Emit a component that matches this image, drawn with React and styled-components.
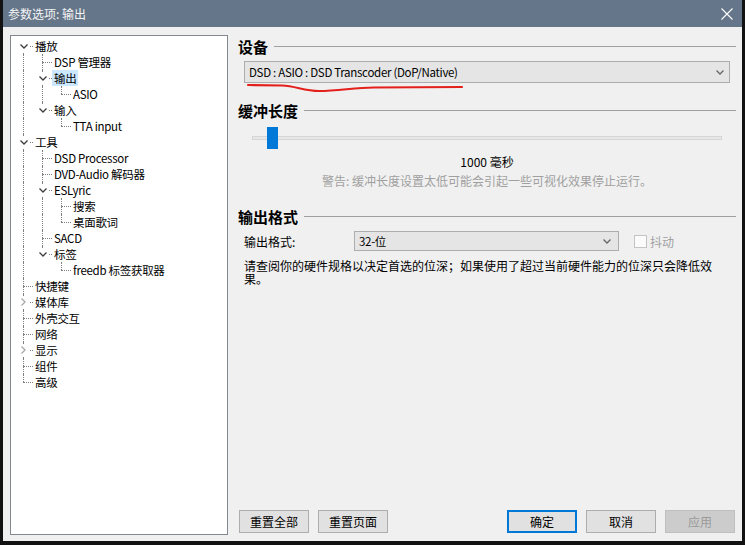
import React from "react";
import styled, { createGlobalStyle } from "styled-components";

const GlobalStyle = createGlobalStyle`
  body {
    margin: 0;
    background: #121212;
    font-family: "Noto Sans CJK SC", "Noto Sans", sans-serif;
    font-size: 12px;
    color: #000;
  }
`;

const Window = styled.div`
  width: 739px;
  height: 541px;
  margin-left: 3px;
  display: flex;
  flex-direction: column;
  background: #f0f0f0;
`;

const TitleBar = styled.div`
  height: 27px;
  flex: none;
  display: flex;
  align-items: center;
  justify-content: space-between;
  padding: 0 9px 0 5px;
  background: #66768a;
  color: #f4f4f4;
  font-size: 12px;
`;

const Body = styled.div`
  flex: 1;
  display: flex;
  gap: 10px;
  padding: 8px 6px 6px 7px;
  min-height: 0;
`;

/* ---------- tree ---------- */

const Tree = styled.div`
  width: 218px;
  flex: none;
  box-sizing: border-box;
  border: 1px solid #828790;
  background: #fff;
  padding: 2px 0 0 3px;
`;

const Row = styled.div`
  display: flex;
  height: 16px;
`;

const Rail = styled.div`
  width: 19px;
  flex: none;
  position: relative;

  &::before {
    content: "";
    display: ${({ $on }) => ($on ? "block" : "none")};
    position: absolute;
    left: 9px;
    top: 0;
    bottom: 0;
    border-left: 1px dotted #808080;
  }
`;

const Joint = styled.div`
  width: 19px;
  flex: none;
  position: relative;

  &::before {
    content: "";
    position: absolute;
    left: 9px;
    top: ${({ $first }) => ($first ? 8 : 0)}px;
    bottom: ${({ $last }) => ($last ? 8 : 0)}px;
    border-left: 1px dotted #808080;
  }

  &::after {
    content: "";
    position: absolute;
    left: 9px;
    right: 0;
    top: 8px;
    border-top: 1px dotted #808080;
  }
`;

const Expander = styled.span`
  position: absolute;
  z-index: 1;
  left: 3px;
  top: 2px;
  width: 13px;
  height: 12px;
  background: #fff;
  display: flex;
  align-items: center;
  justify-content: center;
`;

const Label = styled.span`
  padding: 0 2px;
  height: 16px;
  line-height: 16px;
  font-size: 11.5px;
  letter-spacing: -0.3px;
  white-space: nowrap;
  background: ${({ $selected }) => ($selected ? "#cce8ff" : "transparent")};
`;

const ChevronDown = ({ color = "#3c3c3c" }) => (
  <svg width="8" height="5" viewBox="0 0 8 5">
    <polyline points="0.5,0.5 4,4 7.5,0.5" fill="none" stroke={color} strokeWidth="1.3" />
  </svg>
);

const ChevronRight = () => (
  <svg width="5" height="8" viewBox="0 0 5 8">
    <polyline points="0.5,0.5 4,4 0.5,7.5" fill="none" stroke="#a8a8a8" strokeWidth="1.3" />
  </svg>
);

const pages = [
  {
    label: "播放",
    open: true,
    children: [
      { label: "DSP 管理器" },
      { label: "输出", open: true, selected: true, children: [{ label: "ASIO" }] },
      { label: "输入", open: true, children: [{ label: "TTA input" }] },
    ],
  },
  {
    label: "工具",
    open: true,
    children: [
      { label: "DSD Processor" },
      { label: "DVD-Audio 解码器" },
      { label: "ESLyric", open: true, children: [{ label: "搜索" }, { label: "桌面歌词" }] },
      { label: "SACD" },
      { label: "标签", open: true, children: [{ label: "freedb 标签获取器" }] },
    ],
  },
  { label: "快捷键" },
  { label: "媒体库", children: [{ label: "" }] },
  { label: "外壳交互" },
  { label: "网络" },
  { label: "显示", children: [{ label: "" }] },
  { label: "组件" },
  { label: "高级" },
];

function flatten(nodes, rails = [], out = []) {
  nodes.forEach((node, i) => {
    const last = i === nodes.length - 1;
    out.push({ ...node, rails, last, first: rails.length === 0 && i === 0 });
    if (node.open && node.children) flatten(node.children, [...rails, !last], out);
  });
  return out;
}

const PageTree = () => (
  <Tree>
    {flatten(pages).map((item, i) => (
      <Row key={i}>
        {item.rails.map((on, j) => (
          <Rail key={j} $on={on} />
        ))}
        <Joint $first={item.first} $last={item.last}>
          {item.children && (
            <Expander>{item.open ? <ChevronDown /> : <ChevronRight />}</Expander>
          )}
        </Joint>
        <Label $selected={item.selected}>{item.label}</Label>
      </Row>
    ))}
  </Tree>
);

/* ---------- settings pane ---------- */

const Pane = styled.div`
  flex: 1;
  display: flex;
  flex-direction: column;
`;

const Heading = styled.div`
  display: flex;
  align-items: center;
  gap: 6px;
  height: 22px;
  margin-top: ${({ $top }) => $top || 0}px;
  font-size: 15px;
  font-weight: 700;

  &::after {
    content: "";
    flex: 1;
    height: 1px;
    background: #a0a0a0;
  }
`;

const Field = styled.div`
  position: relative;
  margin: 4px 6px 0 6px;
`;

const Select = styled.div`
  height: ${({ $h }) => $h}px;
  width: ${({ $w }) => ($w ? `${$w}px` : "auto")};
  box-sizing: border-box;
  display: flex;
  align-items: center;
  justify-content: space-between;
  padding: 0 ${({ $pr }) => $pr}px 0 4px;
  border: 1px solid #adadad;
  background: #e5e5e5;
  font-size: 11.5px;
  letter-spacing: -0.3px;
`;

const Scribble = styled.svg`
  position: absolute;
  left: 0;
  top: 22px;
  pointer-events: none;
`;

const Slider = styled.div`
  position: relative;
  height: 22px;
  margin: 6px 14px 0 14px;
  display: flex;
  align-items: center;
`;

const Track = styled.div`
  flex: 1;
  height: 4px;
  box-sizing: border-box;
  border: 1px solid #d6d6d6;
  background: #e7e7e7;
`;

const Thumb = styled.div`
  position: absolute;
  top: 0;
  width: 11px;
  height: 22px;
  background: #0078d7;
`;

const Note = styled.div`
  text-align: center;
  line-height: 14px;
  margin-top: ${({ $top }) => $top}px;
  color: ${({ $muted }) => ($muted ? "#a0a0a0" : "#000")};
`;

const FormatRow = styled.div`
  display: flex;
  align-items: center;
  margin: 4px 0 0 6px;
`;

const FieldLabel = styled.span`
  width: 110px;
  flex: none;
`;

const Check = styled.span`
  display: flex;
  align-items: center;
  gap: 3px;
  margin-left: 15px;
  color: #a0a0a0;

  &::before {
    content: "";
    width: 13px;
    height: 13px;
    box-sizing: border-box;
    border: 1px solid #c4c4c4;
    background: #fbfbfb;
  }
`;

const Hint = styled.p`
  margin: 8px 0 0 6px;
  width: 490px;
  line-height: 13px;
  word-break: break-all;
`;

const Buttons = styled.div`
  margin-top: auto;
  margin-bottom: 2px;
  display: flex;
  gap: 9px;
  padding: 0 1px;
`;

const Spacer = styled.div`
  flex: 1;
`;

const Button = styled.div`
  width: 70px;
  height: 23px;
  box-sizing: border-box;
  display: flex;
  align-items: center;
  justify-content: center;
  font-size: 12px;
  border: ${({ $primary }) => ($primary ? "2px solid #0078d7" : "1px solid #adadad")};
  background: #e1e1e1;
  color: #000;

  ${({ $disabled }) =>
    $disabled &&
    `
    background: #cccccc;
    border-color: #bfbfbf;
    color: #9a9a9a;
  `}
`;

const CloseIcon = () => (
  <svg width="12" height="12" viewBox="0 0 12 12">
    <path d="M0.5 0.5 L11.5 11.5 M11.5 0.5 L0.5 11.5" stroke="#fff" strokeWidth="1.1" />
  </svg>
);

export default function App() {
  return (
    <>
      <GlobalStyle />
      <Window>
        <TitleBar>
          <span>参数选项: 输出</span>
          <CloseIcon />
        </TitleBar>
        <Body>
          <PageTree />
          <Pane>
            <Heading>设备</Heading>
            <Field>
              <Select $h={22} $pr={5}>
                <span>DSD : ASIO : DSD Transcoder (DoP/Native)</span>
                <ChevronDown color="#666" />
              </Select>
              <Scribble width="230" height="12" viewBox="0 0 230 12">
                <path
                  d="M4 2 L38 2.5 C52 3 60 8 75 8 C95 8 110 4.5 130 4.5 L218 4"
                  fill="none"
                  stroke="#e3201b"
                  strokeWidth="2.2"
                  strokeLinecap="round"
                />
              </Scribble>
            </Field>

            <Heading $top={16}>缓冲长度</Heading>
            <Slider>
              <Track />
              <Thumb style={{ left: 15 }} />
            </Slider>
            <Note $top={6}>1000 毫秒</Note>
            <Note $top={5} $muted>
              警告: 缓冲长度设置太低可能会引起一些可视化效果停止运行。
            </Note>

            <Heading $top={17}>输出格式</Heading>
            <FormatRow>
              <FieldLabel>输出格式:</FieldLabel>
              <Select $h={20} $w={265} $pr={7}>
                <span>32-位</span>
                <ChevronDown color="#666" />
              </Select>
              <Check>抖动</Check>
            </FormatRow>
            <Hint>
              请查阅你的硬件规格以决定首选的位深；如果使用了超过当前硬件能力的位深只会降低效果。
            </Hint>

            <Buttons>
              <Button>重置全部</Button>
              <Button>重置页面</Button>
              <Spacer />
              <Button $primary>确定</Button>
              <Button>取消</Button>
              <Button $disabled>应用</Button>
            </Buttons>
          </Pane>
        </Body>
      </Window>
    </>
  );
}
